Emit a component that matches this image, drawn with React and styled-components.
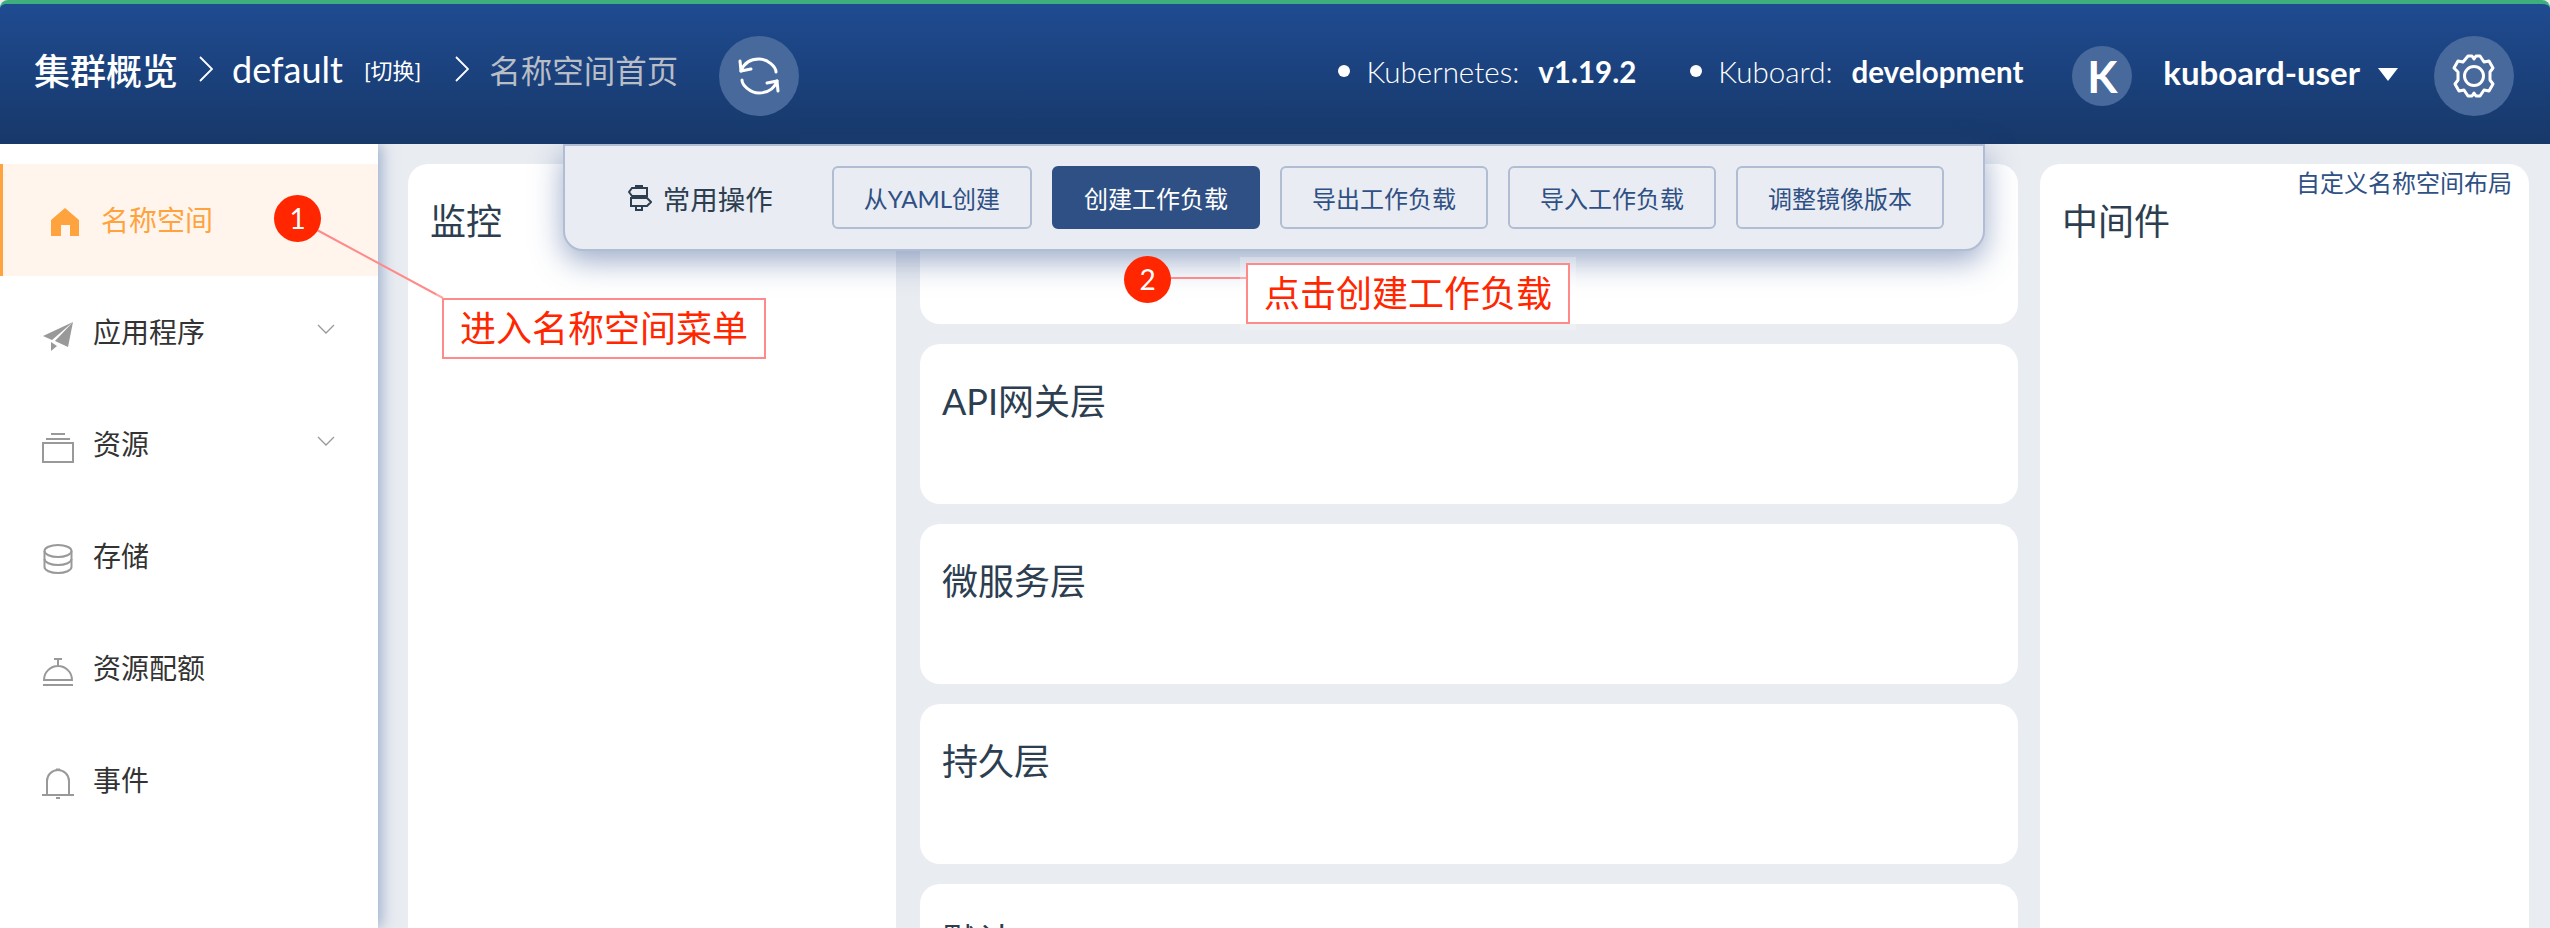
import React from "react";
import styled, { createGlobalStyle } from "styled-components";

const Reset = createGlobalStyle`
  html, body {
    margin: 0;
    padding: 0;
    background: #fff;
    overflow: hidden;
  }
  * {
    box-sizing: border-box;
  }
`;

const Page = styled.div`
  position: relative;
  width: 2550px;
  height: 928px;
  overflow: hidden;
  font-family: Lato, "Noto Sans CJK SC", sans-serif;
  background: #e9ecf1;
`;

const Header = styled.header`
  position: relative;
  height: 144px;
  border-top: 4px solid #3eaf7c;
  border-radius: 8px 8px 0 0;
  background: linear-gradient(#1f4b91, #173869);
  display: flex;
  align-items: center;
  justify-content: space-between;
  color: #fff;
`;

// se queda por encima de la sombra del panel flotante
const HeaderLeft = styled.div`
  position: relative;
  z-index: 4;
  width: 800px;
  height: 100%;
  padding-left: 34px;
  display: flex;
  align-items: center;
  border-radius: 6px 0 0 0;
  background: linear-gradient(#1f4b91, #173869);
`;

const Crumb = styled.span`
  font-size: ${(p) => p.$size || 36}px;
  font-weight: ${(p) => p.$weight || 400};
  color: ${(p) => p.$color || "#fff"};
  margin-right: ${(p) => p.$gap || 0}px;
  margin-top: -10px;
  white-space: nowrap;
`;

const CrumbArrow = styled.svg`
  width: 14px;
  height: 26px;
  margin: -10px ${(p) => p.$right}px 0 ${(p) => p.$left}px;
  fill: none;
  stroke: ${(p) => p.$color || "#fff"};
  stroke-width: 1.8;
`;

const CircleButton = styled.div`
  flex: none;
  width: 80px;
  height: 80px;
  border-radius: 50%;
  background: #48699b;
  display: flex;
  align-items: center;
  justify-content: center;
  margin-top: 4px;
`;

const HeaderRight = styled.div`
  height: 100%;
  padding-right: 36px;
  display: flex;
  align-items: center;
`;

const Info = styled.div`
  display: flex;
  align-items: center;
  font-size: 29.5px;
  margin-right: ${(p) => p.$gap}px;
  margin-top: -6px;
  white-space: nowrap;
  &::before {
    content: "";
    width: 12px;
    height: 12px;
    border-radius: 50%;
    background: #fff;
    margin-right: 16px;
  }
`;

const InfoLabel = styled.span`
  font-weight: 300;
  margin-right: 19px;
`;

const InfoValue = styled.span`
  font-weight: 700;
`;

const Avatar = styled.div`
  width: 60px;
  height: 60px;
  border-radius: 50%;
  background: #48699b;
  display: flex;
  align-items: center;
  justify-content: center;
  font-size: 44px;
  font-weight: 700;
  margin: 4px 31px 0 0;
`;

const UserName = styled.span`
  font-size: 33px;
  font-weight: 700;
  margin-top: -4px;
`;

const Caret = styled.span`
  width: 0;
  height: 0;
  border-left: 10px solid transparent;
  border-right: 10px solid transparent;
  border-top: 13px solid #fff;
  margin: 0 36px 0 18px;
`;

const Body = styled.div`
  display: flex;
  height: 784px;
`;

const Sidebar = styled.nav`
  position: relative;
  z-index: 1;
  flex: none;
  width: 378px;
  padding-top: 20px;
  background: #fff;
  box-shadow: 3px 0 14px rgba(88, 118, 170, 0.55);
`;

const MenuItem = styled.div`
  height: 112px;
  display: flex;
  align-items: center;
  padding: 0 43px 0 ${(p) => (p.$active ? 46 : 42)}px;
  background: ${(p) => (p.$active ? "#fff5ec" : "transparent")};
  border-left: ${(p) => (p.$active ? "3px solid #ffa33f" : "none")};
  color: ${(p) => (p.$active ? "#ffa33f" : "#333")};
  font-size: 28px;
`;

const MenuIcon = styled.svg`
  flex: none;
  width: 32px;
  height: 32px;
  margin: 6px ${(p) => (p.$active ? 20 : 19)}px 0 0;
  color: ${(p) => (p.$active ? "#ffa33f" : "#999")};
`;

const MenuLabel = styled.span`
  flex: 1;
  margin-top: -2px;
`;

const Chevron = styled.svg`
  width: 18px;
  height: 10px;
  margin-top: -6px;
  fill: none;
  stroke: #999;
  stroke-width: 1.3;
`;

const Main = styled.main`
  flex: 1;
  display: flex;
  padding-top: 20px;
  padding-left: 30px;
`;

const Column = styled.div`
  flex: none;
  width: ${(p) => p.$width}px;
  margin-right: ${(p) => p.$gap}px;
  display: flex;
  flex-direction: column;
  gap: 20px;
`;

const Card = styled.section`
  position: relative;
  flex: none;
  height: ${(p) => (p.$tall ? "100%" : "160px")};
  border-radius: ${(p) => (p.$tall ? "20px 20px 0 0" : "20px")};
  padding: 35px 0 0 22px;
  background: #fff;
`;

const CardTitle = styled.h2`
  margin: 0;
  font-size: 36px;
  font-weight: 400;
  line-height: 44px;
  color: #2c3e50;
`;

const LayoutLink = styled.a`
  position: absolute;
  top: 4px;
  right: 17px;
  font-size: 24px;
  line-height: 30px;
  color: #2f5084;
`;

const ActionPanel = styled.div`
  position: absolute;
  z-index: 3;
  top: 144px;
  left: 563px;
  width: 1422px;
  height: 107px;
  padding-right: 39px;
  display: flex;
  align-items: center;
  justify-content: flex-end;
  gap: 20px;
  background: #e9ecf2;
  border: 2px solid #b0bdd3;
  border-radius: 0 0 20px 20px;
  box-shadow: 0 10px 30px rgba(60, 90, 150, 0.5);
`;

const PanelTitle = styled.div`
  display: flex;
  align-items: center;
  margin-right: 39px;
  font-size: 27.5px;
  color: #2c3e50;
`;

const SignIcon = styled.svg`
  width: 24px;
  height: 26px;
  margin-right: 11px;
  fill: none;
  stroke: #2c3e50;
  stroke-width: 2;
`;

const ActionButton = styled.button`
  height: 63px;
  padding: 0 30px;
  border: 2px solid ${(p) => (p.$primary ? "#2f5084" : "#b0bdd3")};
  border-radius: 6px;
  background: ${(p) => (p.$primary ? "#2f5084" : "transparent")};
  color: ${(p) => (p.$primary ? "#fff" : "#2f5084")};
  font-family: inherit;
  font-size: 24px;
  white-space: nowrap;
`;

const Connectors = styled.svg`
  position: absolute;
  z-index: 5;
  top: 0;
  left: 0;
  width: 2550px;
  height: 928px;
  pointer-events: none;
`;

const Badge = styled.div`
  position: absolute;
  z-index: 6;
  top: ${(p) => p.$top}px;
  left: ${(p) => p.$left}px;
  width: 47px;
  height: 47px;
  border-radius: 50%;
  background: #ff2600;
  color: #fff;
  font-size: 28px;
  line-height: 46px;
  text-align: center;
`;

const Callout = styled.div`
  position: absolute;
  z-index: 6;
  top: ${(p) => p.$top}px;
  left: ${(p) => p.$left}px;
  height: 61px;
  padding: 0 16px;
  border: 2px solid #ff8a8a;
  background: #fff;
  box-shadow: 0 0 0 6px rgba(255, 255, 255, 0.25);
  color: #ff2600;
  font-size: 36px;
  line-height: 56px;
  white-space: nowrap;
`;

const menu = [
  {
    label: "名称空间",
    active: true,
    icon: <path fill="currentColor" d="M16 1 30 13V29H21V18H12V29H2V13Z" />,
  },
  {
    label: "应用程序",
    open: true,
    icon: <path fill="currentColor" d="M31 3 1 17l9 4ZM31 3 13 22l13 6ZM9 23v9l6-5Z" />,
  },
  {
    label: "资源",
    open: true,
    icon: (
      <g fill="none" stroke="currentColor" strokeWidth="2">
        <rect x="1" y="12" width="30" height="19" />
        <path d="M4 8h24M9 3h14" />
      </g>
    ),
  },
  {
    label: "存储",
    icon: (
      <g fill="none" stroke="currentColor" strokeWidth="2">
        <ellipse cx="16" cy="8" rx="13.5" ry="6" />
        <path d="M2.5 8v8c0 3.3 6 6 13.5 6s13.5-2.700 13.500-6V8" />
        <path d="M2.500 16v8c0 3.300 6 6 13.500 6s13.500-2.700 13.500-6v-8" />
      </g>
    ),
  },
  {
    label: "资源配额",
    icon: (
      <g fill="none" stroke="currentColor" strokeWidth="2">
        <path d="M2 25a14 14 0 0 1 28 0ZM1 30h30M12 4h8M16 4v7" />
      </g>
    ),
  },
  {
    label: "事件",
    icon: (
      <g fill="none" stroke="currentColor" strokeWidth="2">
        <path d="M5 27V14a11 11 0 0 1 22 0v13M0 28h32" />
        <path d="M14 2.500h4M14 31h4" />
      </g>
    ),
  },
];

const actions = ["从YAML创建", "创建工作负载", "导出工作负载", "导入工作负载", "调整镜像版本"];

// la primera tarjeta queda tapada por el panel flotante
const layers = ["", "API网关层", "微服务层", "持久层", "默认"];

const App = () => (
  <Page>
    <Reset />
    <Header>
      <HeaderLeft>
        <Crumb $weight={500}>集群概览</Crumb>
        <CrumbArrow $left={21} $right={19} viewBox="0 0 14 26">
          <path d="M1 1 13 13 1 25" />
        </CrumbArrow>
        <Crumb $gap={21}>default</Crumb>
        <Crumb $size={22} $gap={34}>[切换]</Crumb>
        <CrumbArrow $left={0} $right={20} viewBox="0 0 14 26">
          <path d="M1 1 13 13 1 25" />
        </CrumbArrow>
        <Crumb $size={31.5} $color="#b9bec6" $gap={41}>名称空间首页</Crumb>
        <CircleButton>
          <svg width="44" height="44" viewBox="0 0 44 44" fill="none" stroke="#fff" strokeWidth="3" strokeLinecap="round" strokeLinejoin="round">
            <path d="M4 17C7 9 14 5 22 5c9 0 17 8 17 13" />
            <path d="M3 7l1 10 10-2" />
            <path d="M40 27c-3 8-10 12-18 12-9 0-17-8-17-13" />
            <path d="M41 37l-1-10-10 2" />
          </svg>
        </CircleButton>
      </HeaderLeft>
      <HeaderRight>
        <Info $gap={54}>
          <InfoLabel>Kubernetes:</InfoLabel>
          <InfoValue>v1.19.2</InfoValue>
        </Info>
        <Info $gap={49}>
          <InfoLabel>Kuboard:</InfoLabel>
          <InfoValue>development</InfoValue>
        </Info>
        <Avatar>K</Avatar>
        <UserName>kuboard-user</UserName>
        <Caret />
        <CircleButton>
          <svg width="46" height="46" viewBox="0 0 46 46" fill="none" stroke="#fff" strokeWidth="3" strokeLinejoin="round">
            <circle cx="23" cy="23" r="9.500" />
            <path d="M17 3h4l2 3 2-3h4l4 6 5-1 4 7-3 4v8l3 4-4 7-5-1-4 6h-4l-2-3-2 3h-4l-4-6-5 1-4-7 3-4v-8L3 15l4-7 5 1Z" />
          </svg>
        </CircleButton>
      </HeaderRight>
    </Header>

    <Body>
      <Sidebar>
        {menu.map((item) => (
          <MenuItem key={item.label} $active={item.active}>
            <MenuIcon $active={item.active} viewBox="0 0 32 32">{item.icon}</MenuIcon>
            <MenuLabel>{item.label}</MenuLabel>
            {item.open && (
              <Chevron viewBox="0 0 18 10">
                <path d="M1 1l8 8 8-8" />
              </Chevron>
            )}
          </MenuItem>
        ))}
      </Sidebar>
      <Main>
        <Column $width={488} $gap={24}>
          <Card $tall>
            <CardTitle>监控</CardTitle>
          </Card>
        </Column>
        <Column $width={1098} $gap={22}>
          {layers.map((name, i) => (
            <Card key={i}>
              {name && <CardTitle>{name}</CardTitle>}
            </Card>
          ))}
        </Column>
        <Column $width={489} $gap={0}>
          <Card $tall>
            <LayoutLink>自定义名称空间布局</LayoutLink>
            <CardTitle>中间件</CardTitle>
          </Card>
        </Column>
      </Main>
    </Body>

    <ActionPanel>
      <PanelTitle>
        <SignIcon viewBox="0 0 24 26">
          <path d="M4 3H19V11H4L1 7Z" />
          <path d="M3 13H19L23 17 19 21H3Z" />
          <path d="M8 3V1H14V3M8 11V13M14 11V13M8 21V25H14V21" />
        </SignIcon>
        常用操作
      </PanelTitle>
      {actions.map((name, i) => (
        <ActionButton key={name} $primary={i === 1}>{name}</ActionButton>
      ))}
    </ActionPanel>

    <Connectors viewBox="0 0 2550 928">
      <path d="M317 230 443 298" fill="none" stroke="#ff8a8a" strokeWidth="2" />
      <path d="M1170 278H1247" fill="none" stroke="#ff8a8a" strokeWidth="2" />
    </Connectors>
    <Badge $top={195} $left={274}>1</Badge>
    <Callout $top={298} $left={442}>进入名称空间菜单</Callout>
    <Badge $top={256} $left={1124}>2</Badge>
    <Callout $top={263} $left={1246}>点击创建工作负载</Callout>
  </Page>
);

export default App;
